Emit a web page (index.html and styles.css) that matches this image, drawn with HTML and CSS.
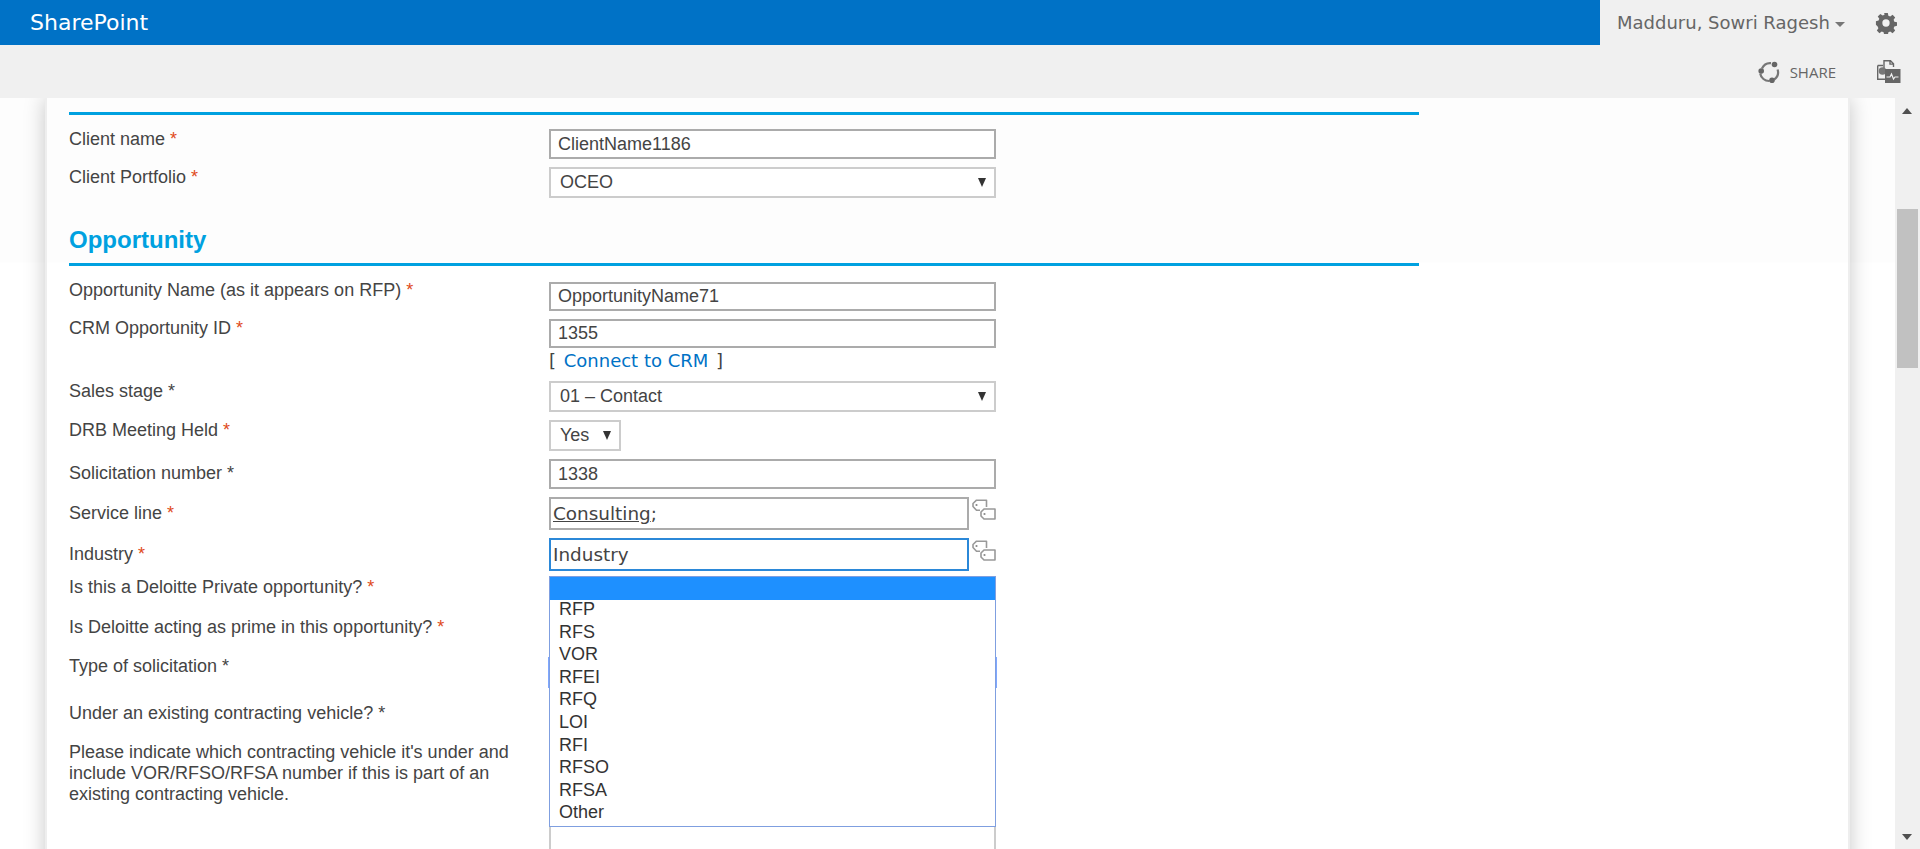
FILE: index.html
```html
<!DOCTYPE html>
<html lang="en">
<head>
    <meta charset="UTF-8">
    <meta name="viewport" content="width=device-width, initial-scale=1.0">
    <title>SharePoint</title>
    <link rel="stylesheet" href="styles.css">
</head>
<body>
    <header class="suite-bar">
        <div class="brand">SharePoint</div>
        <div class="suite-user">
            <span class="user-name">Madduru, Sowri Ragesh</span>
            <span class="user-caret"></span>
            <svg class="gear" viewBox="0 0 24 24" width="22" height="22">
                <path fill="#666" fill-rule="evenodd" d="M10 1h4l.6 3 2 .8 2.6-1.7 2.8 2.8-1.7 2.6.8 2 2.9.6v4l-2.9.6-.8 2 1.7 2.6-2.8 2.8-2.6-1.7-2 .8-.6 2.9h-4l-.6-2.9-2-.8-2.6 1.7-2.8-2.8 1.7-2.6-.8-2L1 14v-4l2.9-.6.8-2L3 4.9l2.8-2.8 2.6 1.7 2-.8zM12 8a4 4 0 1 0 0 8 4 4 0 0 0 0-8z"/>
            </svg>
        </div>
    </header>

    <div class="ribbon">
        <svg class="share-icon" viewBox="0 0 24 24" width="24" height="24">
            <path fill="none" stroke="#777" stroke-width="2.2" d="M5 8.5A9 9 0 0 1 14 3.2M20.6 9.5a9 9 0 0 1-3.4 10M12.5 21A9 9 0 0 1 3.2 13.5"/>
            <circle cx="4.2" cy="11" r="2.8" fill="#666"/>
            <circle cx="17.5" cy="4.5" r="2.8" fill="#666"/>
            <circle cx="15" cy="20.3" r="2.8" fill="#666"/>
        </svg>
        <span class="share-label">SHARE</span>
        <svg class="sync-icon" viewBox="0 0 25 25" width="25" height="25">
            <path fill="none" stroke="#666" stroke-width="1.4" d="M8 11V1.700h6.500l3 3V8M14 1.700v3.400h3.500M1.700 6.500H7M1.700 6.500v13.800H9"/>
            <circle cx="6.500" cy="12" r="3.800" fill="#777"/>
            <rect x="9" y="10" width="15.500" height="14" fill="#666"/>
            <path fill="none" stroke="#f0f0f0" stroke-width="1.200" d="M10.500 18h3.500l1.500-3 2 5 1.500-2h3.500"/>
        </svg>
    </div>

    <div class="workspace">
        <main class="page-card">
            <div class="section-rule first-rule"></div>

            <div class="form-row row-client-name">
                <label class="field-label">Client name <span class="req">*</span></label>
                <input class="text-input" type="text" value="ClientName1186">
            </div>
            <div class="form-row row-portfolio">
                <label class="field-label">Client Portfolio <span class="req">*</span></label>
                <div class="select-box"><span>OCEO</span><i class="arrow"></i></div>
            </div>

            <h2 class="section-title">Opportunity</h2>
            <div class="section-rule"></div>

            <div class="form-row row-opp-name">
                <label class="field-label">Opportunity Name (as it appears on RFP) <span class="req">*</span></label>
                <input class="text-input" type="text" value="OpportunityName71">
            </div>
            <div class="form-row row-crm">
                <label class="field-label">CRM Opportunity ID <span class="req">*</span></label>
                <div>
                    <input class="text-input" type="text" value="1355">
                    <div class="crm-link">[ <a href="#">Connect to CRM</a> ]</div>
                </div>
            </div>
            <div class="form-row row-sales">
                <label class="field-label">Sales stage <span class="plain-req">*</span></label>
                <div class="select-box"><span>01 – Contact</span><i class="arrow"></i></div>
            </div>
            <div class="form-row row-drb">
                <label class="field-label">DRB Meeting Held <span class="req">*</span></label>
                <div class="select-box small-select"><span>Yes</span><i class="arrow"></i></div>
            </div>
            <div class="form-row row-solicitation">
                <label class="field-label">Solicitation number <span class="plain-req">*</span></label>
                <input class="text-input" type="text" value="1338">
            </div>
            <div class="form-row row-service">
                <label class="field-label">Service line <span class="req">*</span></label>
                <div class="taxonomy">
                    <div class="taxonomy-input"><u>Consulting</u>;</div>
                    <svg class="tag-icon" viewBox="0 0 24 24" width="24" height="24">
                        <path fill="none" stroke="#999" stroke-width="1.6" stroke-linejoin="round" d="M14.500 10V3.200H4.500L1 6.500v3l3.500 3.800H8"/>
                        <path fill="none" stroke="#999" stroke-width="1.6" stroke-linejoin="round" d="M12 12h11v10H12l-3-3v-4z"/>
                        <circle cx="4.500" cy="8" r="1.100" fill="#888"/>
                        <circle cx="12.500" cy="17" r="1.100" fill="#888"/>
                    </svg>
                </div>
            </div>
            <div class="form-row row-industry">
                <label class="field-label">Industry <span class="req">*</span></label>
                <div class="taxonomy">
                    <div class="taxonomy-input is-focused">Industry</div>
                    <svg class="tag-icon" viewBox="0 0 24 24" width="24" height="24">
                        <path fill="none" stroke="#999" stroke-width="1.6" stroke-linejoin="round" d="M14.500 10V3.200H4.500L1 6.500v3l3.500 3.800H8"/>
                        <path fill="none" stroke="#999" stroke-width="1.6" stroke-linejoin="round" d="M12 12h11v10H12l-3-3v-4z"/>
                        <circle cx="4.500" cy="8" r="1.100" fill="#888"/>
                        <circle cx="12.500" cy="17" r="1.100" fill="#888"/>
                    </svg>
                </div>
            </div>
            <div class="form-row row-private">
                <label class="field-label">Is this a Deloitte Private opportunity? <span class="req">*</span></label>
            </div>
            <div class="form-row row-prime">
                <label class="field-label">Is Deloitte acting as prime in this opportunity? <span class="req">*</span></label>
            </div>
            <div class="form-row row-type">
                <label class="field-label">Type of solicitation <span class="plain-req">*</span></label>
                <div class="type-field">
                    <div class="select-box is-open"></div>
                    <ul class="dropdown-list">
                        <li class="is-active">&nbsp;</li>
                        <li>RFP</li>
                        <li>RFS</li>
                        <li>VOR</li>
                        <li>RFEI</li>
                        <li>RFQ</li>
                        <li>LOI</li>
                        <li>RFI</li>
                        <li>RFSO</li>
                        <li>RFSA</li>
                        <li>Other</li>
                    </ul>
                </div>
            </div>
            <div class="form-row row-vehicle">
                <label class="field-label">Under an existing contracting vehicle? <span class="plain-req">*</span></label>
            </div>
            <div class="form-row row-please">
                <label class="field-label wrap-label">Please indicate which contracting vehicle it's under and include VOR/RFSO/RFSA number if this is part of an existing contracting vehicle.</label>
                <textarea class="text-area"></textarea>
            </div>
        </main>
        <div class="scrollbar">
            <i class="scroll-up"></i>
            <div class="scroll-thumb"></div>
            <i class="scroll-down"></i>
        </div>
    </div>
</body>
</html>
```

FILE: styles.css
```css
html, body {
    height: 100%;
    overflow: hidden;
}
body {
    margin: 0;
    display: flex;
    flex-direction: column;
    font-family: "Liberation Sans", Arial, sans-serif;
    font-size: 18px;
    color: #444;
    background-color: #fff;
}

/* top bar */
.suite-bar {
    height: 45px;
    flex: none;
    display: flex;
    justify-content: space-between;
    background-color: #0072c6;
}
.brand {
    padding-left: 30px;
    font-family: "DejaVu Sans", sans-serif;
    font-size: 22px;
    line-height: 45px;
    color: #fff;
}
.suite-user {
    width: 320px;
    display: flex;
    align-items: center;
    box-sizing: border-box;
    padding-left: 17px;
    background-color: #f0f0f0;
}
.user-name {
    font-family: "DejaVu Sans", sans-serif;
    font-size: 18px;
    color: #666;
}
.user-caret {
    margin: 3px 0 0 5px;
    border-left: 5.5px solid transparent;
    border-right: 5.5px solid transparent;
    border-top: 5px solid #777;
}
.gear {
    margin-left: 30px;
}

/* ribbon */
.ribbon {
    height: 53px;
    flex: none;
    display: flex;
    align-items: center;
    justify-content: flex-end;
    padding-right: 19px;
    background-color: #f0f0f0;
}
.share-label {
    margin: 0 40px 0 9px;
    font-family: "Open Sans", sans-serif;
    font-size: 15px;
    color: #666;
}

/* page area */
.workspace {
    flex: 1;
    min-height: 0;
    display: flex;
    overflow: hidden;
    background: linear-gradient(#fdfdfd, #fdfdfd 164px, #fff 165px);
}
.page-card {
    width: 1805px;
    height: 1000px;
    margin-left: 45px;
    margin-right: 45px;
    padding-left: 22px;
    box-sizing: border-box;
    flex: none;
    border-left: 2px solid #eee;
    border-right: 2px solid #eee;
    background: linear-gradient(#fdfdfd, #fdfdfd 164px, #fff 165px);
    box-shadow: 0 0 20px rgba(0, 0, 0, 0.22);
}
.section-rule {
    width: 1350px;
    height: 3px;
    background-color: #00a1e0;
}
.first-rule {
    margin-top: 14px;
}
.section-title {
    margin: 28px 0 9px;
    font-size: 24px;
    line-height: 28px;
    color: #00a1e0;
}

/* form rows */
.form-row {
    display: grid;
    grid-template-columns: 480px 447px;
    align-items: start;
}
.field-label {
    line-height: 21px;
}
.wrap-label {
    display: block;
    width: 450px;
}
.req {
    color: #e04a20;
}
.plain-req {
    color: #444;
}
.text-input {
    display: block;
    width: 100%;
    height: 30px;
    padding: 0 7px;
    box-sizing: border-box;
    border: 2px solid #ababab;
    background-color: #fff;
    font-family: "Liberation Sans", Arial, sans-serif;
    font-size: 18px;
    color: #444;
    outline: none;
}
.select-box {
    height: 31px;
    padding: 0 8px 0 9px;
    display: flex;
    align-items: center;
    justify-content: space-between;
    box-sizing: border-box;
    border: 2px solid #ccc;
    background-color: #fff;
}
.small-select {
    width: 72px;
}
.arrow {
    border-left: 4.5px solid transparent;
    border-right: 4.5px solid transparent;
    border-top: 9px solid #333;
}
.crm-link {
    margin-top: 3px;
    font-family: "DejaVu Sans", sans-serif;
    font-size: 18px;
    line-height: 20px;
}
.crm-link a {
    margin: 0 2px;
    color: #0072c6;
    text-decoration: none;
}
.taxonomy {
    display: flex;
    justify-content: space-between;
}
.taxonomy-input {
    width: 420px;
    height: 33px;
    padding-left: 2px;
    box-sizing: border-box;
    border: 2px solid #ababab;
    background-color: #fff;
    font-family: "DejaVu Sans", sans-serif;
    font-size: 18.4px;
    line-height: 29px;
}
.taxonomy-input.is-focused {
    border-color: #2b88d8;
}
.text-area {
    display: block;
    width: 100%;
    height: 120px;
    box-sizing: border-box;
    border: 2px solid #ccc;
    resize: none;
    outline: none;
}

/* row spacing, the labels do not line up with the fields the same way in every row */
.row-client-name { margin-top: 14px; }
.row-portfolio { margin-top: 8px; }
.row-opp-name { margin-top: 16px; }
.row-crm { margin-top: 8px; }
.row-sales { margin-top: 10px; }
.row-drb { margin-top: 8px; }
.row-solicitation { margin-top: 8px; }
.row-service { margin-top: 8px; }
.row-industry { margin-top: 8px; }
.row-private { margin-top: 6px; height: 40px; }
.row-prime { height: 40px; }
.row-type { height: 47px; }
.row-vehicle { height: 39px; }
.row-opp-name .text-input,
.row-crm .text-input { height: 29px; }
.row-opp-name .field-label { margin-top: -2px; }
.row-crm .field-label { margin-top: -1px; }
.row-solicitation .field-label { margin-top: 4px; }
.row-service .field-label { margin-top: 6px; }
.row-industry .field-label { margin-top: 6px; }
.row-type .field-label,
.row-vehicle .field-label,
.row-please .field-label { margin-top: -1px; }

/* open list of the type select, lies over the fields below the industry row */
.type-field {
    position: relative;
}
.select-box.is-open {
    margin: 0 -1px;
    border-color: #7fa7ff;
}
.dropdown-list {
    position: absolute;
    top: -81px;
    left: 0;
    right: 0;
    margin: 0;
    padding: 0;
    list-style: none;
    border: 1px solid #7f9fe0;
    background-color: #fff;
    color: #333;
}
.dropdown-list li {
    height: 22.6px;
    padding-left: 9px;
    line-height: 18px;
}
.dropdown-list .is-active {
    height: 23px;
    background-color: #1e90ff;
}

/* scrollbar */
.scrollbar {
    width: 25px;
    flex: none;
    position: relative;
    background-color: #f0f0f0;
}
.scroll-up, .scroll-down {
    position: absolute;
    left: 7px;
    border-left: 5.5px solid transparent;
    border-right: 5.5px solid transparent;
}
.scroll-up {
    top: 10px;
    border-bottom: 6px solid #505050;
}
.scroll-down {
    bottom: 9px;
    border-top: 6px solid #505050;
}
.scroll-thumb {
    position: absolute;
    top: 111px;
    left: 2px;
    width: 21px;
    height: 159px;
    background-color: #c1c1c1;
}
```
